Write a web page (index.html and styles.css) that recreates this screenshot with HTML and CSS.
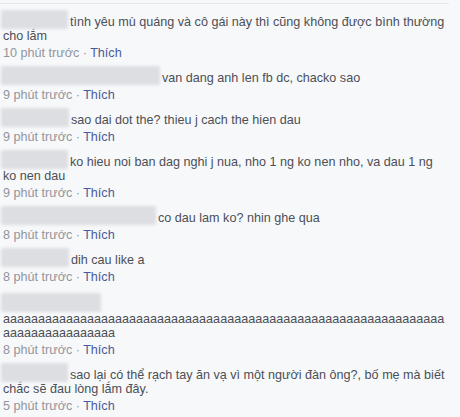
FILE: index.html
```html
<!DOCTYPE html>
<html lang="vi">
<head>
<meta charset="utf-8">
<title>Bình luận</title>
<link rel="stylesheet" href="styles.css">
</head>
<body>
<div class="list">
  <div class="comment">
    <div class="body"><span class="name" style="width:67px"></span>tình yêu mù quáng và cô gái này thì cũng không được bình thường cho lắm</div>
    <div class="meta">10 phút trước<span class="sep"> · </span><a class="like">Thích</a></div>
  </div>
  <div class="comment">
    <div class="body"><span class="name" style="width:159px"></span>van dang anh len fb dc, chacko sao</div>
    <div class="meta">9 phút trước<span class="sep"> · </span><a class="like">Thích</a></div>
  </div>
  <div class="comment">
    <div class="body"><span class="name" style="width:68px"></span>sao dai dot the? thieu j cach the hien dau</div>
    <div class="meta">9 phút trước<span class="sep"> · </span><a class="like">Thích</a></div>
  </div>
  <div class="comment">
    <div class="body"><span class="name" style="width:67px"></span>ko hieu noi ban dag nghi j nua, nho 1 ng ko nen nho, va dau 1 ng ko nen dau</div>
    <div class="meta">9 phút trước<span class="sep"> · </span><a class="like">Thích</a></div>
  </div>
  <div class="comment">
    <div class="body"><span class="name" style="width:155px"></span>co dau lam ko? nhin ghe qua</div>
    <div class="meta">8 phút trước<span class="sep"> · </span><a class="like">Thích</a></div>
  </div>
  <div class="comment">
    <div class="body"><span class="name" style="width:68px"></span>dih cau like a</div>
    <div class="meta">8 phút trước<span class="sep"> · </span><a class="like">Thích</a></div>
  </div>
  <div class="comment">
    <div class="body wrap"><span class="name" style="width:100px"></span>aaaaaaaaaaaaaaaaaaaaaaaaaaaaaaaaaaaaaaaaaaaaaaaaaaaaaaaaaaaaaaaaaaaaaaaaaaaaaaa</div>
    <div class="meta">8 phút trước<span class="sep"> · </span><a class="like">Thích</a></div>
  </div>
  <div class="comment">
    <div class="body"><span class="name" style="width:67px"></span>sao lại có thể rạch tay ăn vạ vì một người đàn ông?, bố mẹ mà biết chắc sẽ đau lòng lắm đây.</div>
    <div class="meta">5 phút trước<span class="sep"> · </span><a class="like">Thích</a></div>
  </div>
</div>
</body>
</html>
```

FILE: styles.css
```css
html, body {
  margin: 0;
  padding: 0;
  background: #f7f8fa;
}

body {
  font-family: "Liberation Sans", Arial, sans-serif;
  font-size: 12.6px;
  color: #4b4f56;
  overflow: hidden;
}

.list {
  margin-top: 3px;
  width: 449px;
  border-top: 1px solid #e6e7ea;
  padding: 11px 1px 0 3px;
  box-sizing: border-box;
}

.comment {
  margin-bottom: 10px;
}

.body {
  line-height: 14px;
}

.wrap {
  overflow-wrap: break-word;
}

.name {
  display: inline-block;
  height: 19px;
  margin: -5px 2px -1px -2px;
  vertical-align: -2px;
  background: #dcdee2;
  filter: blur(1.6px);
  border-radius: 2px;
}

.wrap .name {
  margin-top: -2px;
}

.meta {
  margin-top: 2px;
  line-height: 16px;
  color: #91959d;
}

.sep {
  color: #91959d;
}

.like {
  color: #485a99;
  text-decoration: none;
}
```
